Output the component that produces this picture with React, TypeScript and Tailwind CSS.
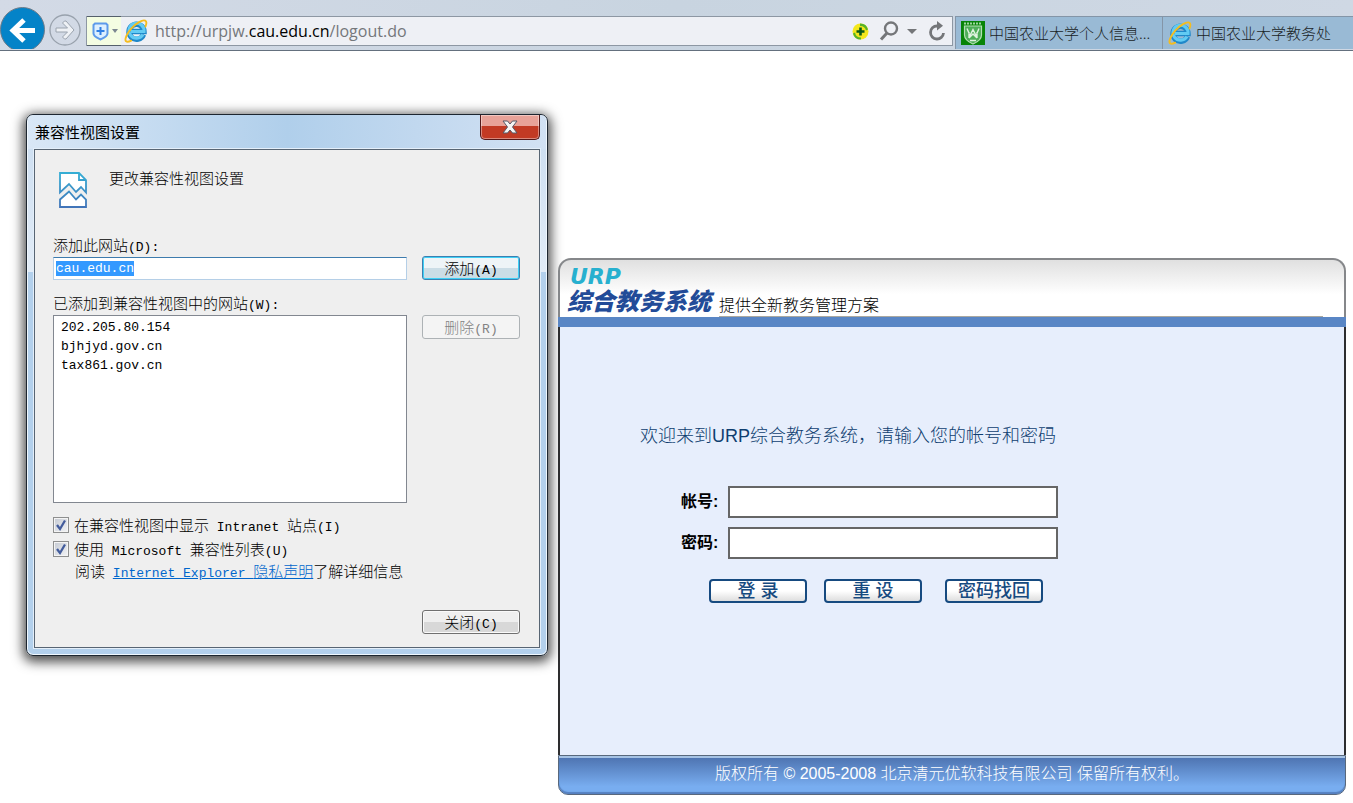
import { useEffect, useRef, useState, type ReactNode } from "react";
import clsx from "clsx";

const COMPAT_SITES = ["202.205.80.154", "bjhjyd.gov.cn", "tax861.gov.cn"];

function IeLogo() {
  return (
    <svg width="24" height="24" viewBox="0 0 24 24" fill="none" className="shrink-0" aria-hidden="true">
      <path d="M19.500 15.500a7.500 7.500 0 1 1 .5-3H7" stroke="#2088c9" strokeWidth="5.400" />
      <path d="M19 15.500a7.500 7.500 0 1 1 1-3H7" stroke="#62cbf3" strokeWidth="3.200" />
      <path
        d="M21.500 7.500c1.200-3 1-5.200-.3-5.900C18.600.3 12 4.200 7.200 9.600 2.500 15 .4 20.700 2 22.200c.9.900 3 .6 5.200-.5"
        stroke="#f5bd1f"
        strokeWidth="1.900"
        strokeLinecap="round"
      />
    </svg>
  );
}

function CampusLogo() {
  return (
    <svg width="24" height="24" viewBox="0 0 24 24" className="shrink-0" aria-hidden="true">
      <rect width="24" height="24" fill="#088408" />
      <path d="M3 2.500h18" stroke="#9ed59e" strokeWidth="2" strokeDasharray="2 1" />
      <path d="M3.500 5h17v9c0 4-4 7-8.500 9-4.500-2-8.500-5-8.500-9z" fill="#4fae58" stroke="#b4dfb4" strokeWidth="1.200" />
      <path d="M6 7.500l3 7 3-6 3 6 3-7M8 11v6M16 11v6M8 17l4-4 4 4M9 19.500h6" stroke="#dff2df" strokeWidth="1.400" fill="none" />
    </svg>
  );
}

function BrowserTab({ icon, title, className }: { icon: ReactNode; title: string; className: string }) {
  return (
    <button
      type="button"
      className={clsx(
        "flex h-[33px] items-center gap-1 border-l border-t border-[#8495a7] bg-[#99bad5] pl-[5px] text-left text-[15px] text-[#1a1f26]",
        className,
      )}
    >
      {icon}
      <span className="whitespace-nowrap">{title}</span>
    </button>
  );
}

function BrowserBar() {
  return (
    <header className="flex h-[51px] items-end overflow-hidden border-b border-[#64707e] bg-linear-to-r from-[#d3dae6] via-[#c8d4e0] to-[#cfd8e4] pb-px">
      <button type="button" aria-label="后退" className="h-[42px] w-[45px] shrink-0 overflow-hidden">
        <svg width="45" height="45" viewBox="0 0 45 45" fill="none">
          <circle cx="22.500" cy="22.500" r="22" fill="#0483c8" stroke="#6c7c8b" />
          <path d="M35 23.500H13M24 13L13 23.500 24 34" stroke="#fff" strokeWidth="5" />
        </svg>
      </button>
      <button type="button" aria-label="前进" className="mb-[3px] ml-1 shrink-0">
        <svg width="32" height="32" viewBox="0 0 32 32" fill="none">
          <circle cx="16" cy="16" r="15" stroke="#98a1ac" strokeWidth="1.300" />
          <path
            d="M7 14h11.500l-5-5 2-2h1.500l8 9-8 9h-1.500l-2-2 5-5H7z"
            fill="#eef1f5"
            stroke="#9aa3ae"
            strokeLinejoin="round"
          />
        </svg>
      </button>
      <div className="mb-[3px] ml-[5px] flex h-[30px] min-w-0 flex-1 items-center border border-[#8d97a3] bg-[#eef0f5]">
        <button
          type="button"
          aria-label="网站安全"
          className="flex h-[30px] w-[34px] items-center gap-[3px] border-y border-[#55606b] bg-[#f4fde2] pl-[5px]"
        >
          <svg width="17" height="19" viewBox="0 0 17 19" fill="none">
            <path
              d="M3 1.500h11l1.500 1.500v8.500c0 3-4 4.500-7 6-3-1.500-7-3-7-6V3z"
              fill="#dcefff"
              stroke="#5e9bea"
              strokeWidth="2"
            />
            <path d="M8.500 5v8M4.500 9h8" stroke="#2f7fe4" strokeWidth="2" />
          </svg>
          <svg width="6" height="4" viewBox="0 0 6 4">
            <path d="M0 0h6L3 4z" fill="#7c8791" />
          </svg>
        </button>
        <div className="ml-[3px] flex min-w-0 flex-1 items-center gap-[7px]">
          <IeLogo />
          <div
            role="textbox"
            aria-label="地址"
            contentEditable
            suppressContentEditableWarning
            className="min-w-0 flex-1 whitespace-nowrap font-['Open_Sans','Noto_Sans',sans-serif] text-base font-normal leading-6 text-[#74777b] outline-none"
          >
            http://urpjw.<span className="text-black">cau.edu.cn</span>/logout.do
          </div>
        </div>
        <div className="flex items-center gap-2 pr-1.5">
          <button type="button" aria-label="加速">
            <svg width="17" height="17" viewBox="0 0 17 17">
              <circle cx="8.500" cy="8.500" r="8" fill="#f3e71b" />
              <path d="M8 .5a8 8 0 0 1 8 6l-2 1A6 6 0 0 0 8 3zM9 16.500a8 8 0 0 1-8-6l2-1a6 6 0 0 0 6 5z" fill="#55b32a" />
              <path d="M8.500 4.500v8M4.500 8.500h8" stroke="#0a5a16" strokeWidth="2.600" />
            </svg>
          </button>
          <button type="button" aria-label="搜索" className="flex items-center gap-2">
            <svg width="22" height="20" viewBox="0 0 22 20" fill="none" stroke="#747679">
              <circle cx="14" cy="7.500" r="6" strokeWidth="2.400" />
              <path d="M10 12l-6 6.500" strokeWidth="3" />
            </svg>
            <svg width="10" height="5" viewBox="0 0 10 5">
              <path d="M0 0h10L5 5z" fill="#747679" />
            </svg>
          </button>
          <button type="button" aria-label="刷新" className="pl-[3px]">
            <svg width="18" height="20" viewBox="0 0 18 20" fill="none">
              <path d="M11 5H9a6.500 6.500 0 1 0 6.500 7" stroke="#747679" strokeWidth="2.800" />
              <path d="M9 0l6 4.800-6 4.700z" fill="#747679" />
            </svg>
          </button>
        </div>
      </div>
      <nav className="ml-0.5 flex w-[398px] shrink-0">
        <BrowserTab icon={<CampusLogo />} title="中国农业大学个人信息..." className="w-[207px]" />
        <BrowserTab icon={<IeLogo />} title="中国农业大学教务处" className="flex-1" />
      </nav>
    </header>
  );
}

// Latin runs in the dialog use the half-width monospace face
function Mono({ children }: { children: ReactNode }) {
  return (
    <span className="whitespace-pre font-['Liberation_Mono',monospace] text-[13px] leading-none">{children}</span>
  );
}

interface DialogButtonProps {
  label: string;
  accessKey: string;
  focused?: boolean;
  disabled?: boolean;
}

function DialogButton({ label, accessKey, focused, disabled }: DialogButtonProps) {
  return (
    <button
      type="button"
      disabled={disabled}
      className={clsx(
        "h-6 w-[98px] rounded-[3px] border text-[15px] leading-5",
        focused &&
          "border-[#3c7fb1] bg-linear-to-b from-[#eef4f7] from-50% to-[#cbdde6] to-50% shadow-[inset_0_0_0_1px_#3fd0f5]",
        disabled && "border-[#adb2b5] bg-[#f4f4f4] text-[#838383]",
        !focused &&
          !disabled &&
          "border-[#707070] bg-linear-to-b from-[#efefef] from-50% to-[#d8d8d8] to-50% shadow-[inset_0_0_0_1px_#fafafa]",
      )}
    >
      {label}
      <Mono>({accessKey})</Mono>
    </button>
  );
}

function DialogCheckbox({ children }: { children: ReactNode }) {
  return (
    <label className="flex h-6 items-center gap-[5px]">
      <span className="relative h-4 w-4">
        <input
          type="checkbox"
          defaultChecked
          className="peer block h-4 w-4 appearance-none border border-[#8e8f8f] bg-linear-to-br from-[#c5cad3] to-[#f3f4f6] shadow-[inset_0_0_0_1px_#f4f4f4]"
        />
        <svg
          viewBox="0 0 16 16"
          fill="none"
          className="pointer-events-none absolute inset-0 hidden h-4 w-4 peer-checked:block"
        >
          <path d="M4 8l3 4 5-8.500" stroke="#435c9c" strokeWidth="2.300" />
        </svg>
      </span>
      <span>{children}</span>
    </label>
  );
}

function CompatibilityDialog() {
  const [site, setSite] = useState("cau.edu.cn");
  const siteInput = useRef<HTMLInputElement>(null);

  useEffect(() => {
    siteInput.current?.focus();
    siteInput.current?.select();
  }, []);

  return (
    <section
      role="dialog"
      aria-labelledby="compat-title"
      className="w-[522px] shrink-0 rounded-[7px] border border-[#1d2630] bg-linear-to-b from-[#c9dcf0] from-0% via-[#e2ecf7] via-29% to-[#b3d0ec] to-29% px-[7px] pb-[7px] text-[15px] text-black shadow-[inset_0_0_0_1px_#f0f7fd,0_3px_12px_3px_rgba(0,0,0,0.7)]"
    >
      <div className="-mx-1.5 flex h-[34px] items-start justify-between rounded-t-[6px] bg-linear-to-r from-[#d9e7f6] via-[#b0cfeb] to-[#d2e1f3] pl-[7px] pr-1.5">
        <h1 id="compat-title" className="text-[15px] font-normal leading-[34px]">
          兼容性视图设置
        </h1>
        <button
          type="button"
          aria-label="关闭"
          className="flex h-[25px] w-[60px] items-center justify-center rounded-b-[5px] border border-t-0 border-[#53191a] bg-linear-to-b from-[#e8a298] from-45% to-[#c23a24] to-45% shadow-[inset_0_0_0_1px_rgba(255,255,255,0.4)]"
        >
          <svg width="16" height="14" viewBox="0 0 16 14">
            <path
              d="M1 1h4.500L8 4l2.500-3H15l-4.500 6L15 13h-4.500L8 10l-2.500 3H1l4.500-6z"
              fill="#f5f5f5"
              stroke="#565867"
            />
          </svg>
        </button>
      </div>

      <div className="border border-[#586573] bg-[#efefef] pb-[13px] pl-[18px] pr-[19px] pt-[18px] shadow-[0_0_0_1px_#e4effa]">
        <div className="flex items-start gap-[22px] pl-1.5">
          <svg width="28" height="36" viewBox="0 0 28 36" fill="none" className="mt-1" aria-hidden="true">
            <defs>
              <linearGradient id="page" x1="0" y1="0" x2="0" y2="36" gradientUnits="userSpaceOnUse">
                <stop stopColor="#35afd5" />
                <stop offset="1" stopColor="#4173b8" />
              </linearGradient>
            </defs>
            <path
              d="M1 20.500V1h19l7 7v12.500L22 15l-5 5-7-8z"
              fill="#fff"
              stroke="url(#page)"
              strokeWidth="1.800"
            />
            <path d="M20 1v7h7" stroke="url(#page)" strokeWidth="1.800" />
            <path d="M1 35v-7.500L10 19.500l7 8 5-5 5 5V35z" fill="#fff" stroke="url(#page)" strokeWidth="1.800" />
          </svg>
          <p className="leading-5">更改兼容性视图设置</p>
        </div>

        <label htmlFor="site" className="mt-[27px] block leading-5">
          添加此网站<Mono>(D):</Mono>
        </label>
        <div className="mt-px flex items-center justify-between">
          <input
            id="site"
            ref={siteInput}
            value={site}
            onChange={(e) => setSite(e.target.value)}
            className="h-[23px] w-[354px] border border-[#b5cfe7] border-t-[#3d7bad] bg-white px-0.5 font-['Liberation_Mono',monospace] text-[13px] outline-none selection:bg-[#3399ff] selection:text-white"
          />
          <DialogButton label="添加" accessKey="A" focused />
        </div>

        <label htmlFor="sites" className="mt-[13px] block leading-5">
          已添加到兼容性视图中的网站<Mono>(W):</Mono>
        </label>
        <div className="mt-0.5 flex items-start justify-between">
          <select
            id="sites"
            size={9}
            className="h-[188px] w-[354px] appearance-none overflow-hidden border border-[#828790] bg-white px-[3px] pt-1 outline-none"
          >
            {COMPAT_SITES.map((s) => (
              <option key={s} className="h-[19px] px-1 py-0 font-['Liberation_Mono',monospace] text-[13px] leading-[19px]">
                {s}
              </option>
            ))}
          </select>
          <DialogButton label="删除" accessKey="R" disabled />
        </div>

        <div className="mt-2.5">
          <DialogCheckbox>
            在兼容性视图中显示<Mono> Intranet </Mono>站点<Mono>(I)</Mono>
          </DialogCheckbox>
          <DialogCheckbox>
            使用<Mono> Microsoft </Mono>兼容性列表<Mono>(U)</Mono>
          </DialogCheckbox>
          <p className="whitespace-nowrap pl-[22px] leading-5">
            阅读<Mono> </Mono>
            <a href="#privacy" className="text-[#0066cc] underline">
              <Mono>Internet Explorer </Mono>隐私声明
            </a>
            了解详细信息
          </p>
        </div>

        <div className="mt-[29px] flex justify-end">
          <DialogButton label="关闭" accessKey="C" />
        </div>
      </div>
    </section>
  );
}

function LoginField({ id, label, type }: { id: string; label: string; type: string }) {
  return (
    <div className="flex items-center gap-[9px]">
      <label htmlFor={id} className="w-[38px] whitespace-nowrap text-base font-bold leading-6 text-black">
        {label}:
      </label>
      <input id={id} type={type} className="h-8 w-[330px] border-2 border-[#666666] bg-white px-2 outline-none" />
    </div>
  );
}

function LoginButton({ type = "button", children }: { type?: "button" | "submit" | "reset"; children: ReactNode }) {
  return (
    <button
      type={type}
      className="h-6 w-[98px] whitespace-pre rounded-[4px] border-2 border-[#164a80] bg-linear-to-b from-white from-50% to-[#dedede] text-lg font-medium leading-5 text-[#164a80]"
    >
      {children}
    </button>
  );
}

function LoginPortal() {
  return (
    <section className="min-w-0 flex-1 font-['Liberation_Sans','Noto_Sans_CJK_SC',sans-serif]">
      <header className="flex h-[59px] items-end rounded-t-[13px] border-x-2 border-t-2 border-[#85878a] bg-linear-to-b from-[#e0e0e0] to-white to-60% pl-[7px] pr-[21px]">
        <div className="w-[152px] shrink-0 whitespace-nowrap font-bold italic">
          <div className="pl-[3px] font-['DejaVu_Sans',sans-serif] text-[22px] leading-5 text-[#27b0cf]">URP</div>
          <div className="text-2xl font-black leading-[30px] text-[#224b98]">综合教务系统</div>
        </div>
        <p className="flex-1 border-b border-[#aaa8a0] text-base leading-5 text-black">提供全新教务管理方案</p>
      </header>
      <div className="h-2.5 bg-[#5986c5]" />

      <form
        onSubmit={(e) => e.preventDefault()}
        className="border-x-2 border-[#2d2d2f] bg-[#e7eefc] pb-[152px] pl-20 pt-[97px]"
      >
        <p className="text-lg leading-6 text-[#0f3e70]">
          欢迎来到<span className="font-normal">URP</span>综合教务系统，请输入您的帐号和密码
        </p>
        <div className="mt-[38px] flex flex-col gap-[9px] pl-[41px]">
          <LoginField id="account" label="帐号" type="text" />
          <LoginField id="password" label="密码" type="password" />
        </div>
        <div className="mt-5 flex gap-[23px] pl-[69px]">
          <div className="flex gap-[17px]">
            <LoginButton type="submit">登 录</LoginButton>
            <LoginButton type="reset">重 设</LoginButton>
          </div>
          <LoginButton>密码找回</LoginButton>
        </div>
      </form>

      <footer className="h-10 rounded-b-[10px] border border-[#59687c] bg-linear-to-b from-[#4c71ae] to-[#78adf0] to-80% text-center text-base leading-9 text-white shadow-[inset_0_2px_0_#a5c2e4,inset_0_-2px_1px_#5580c0]">
        版权所有 © 2005-2008 北京清元优软科技有限公司 保留所有权利。
      </footer>
    </section>
  );
}

export default function App() {
  return (
    <div className="min-h-screen bg-white font-['Noto_Sans_CJK_SC',sans-serif] font-light">
      <BrowserBar />
      <main className="flex items-start gap-2.5 pb-2 pl-[26px] pr-[7px] pt-[63px]">
        <CompatibilityDialog />
        <div className="flex min-w-0 flex-1 pt-36">
          <LoginPortal />
        </div>
      </main>
    </div>
  );
}
